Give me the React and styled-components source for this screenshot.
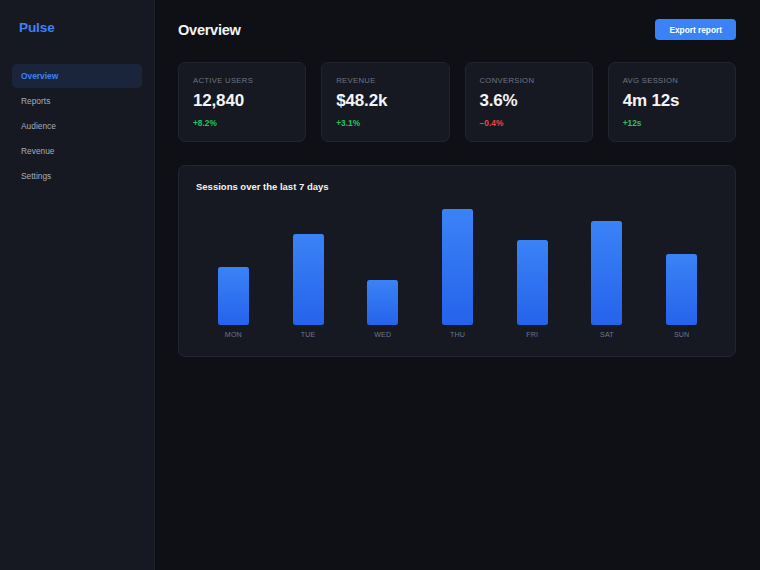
import React from 'react';
import styled, { createGlobalStyle } from 'styled-components';

const GlobalStyle = createGlobalStyle`
  * { box-sizing: border-box; }
  html, body {
    margin: 0;
    padding: 0;
    background: #0f1015;
    font-family: "Liberation Sans", Arial, sans-serif;
  }
`;

const stats = [
  { label: 'Active users', value: '12,840', delta: '+8.2%', up: true },
  { label: 'Revenue', value: '$48.2k', delta: '+3.1%', up: true },
  { label: 'Conversion', value: '3.6%', delta: '\u22120.4%', up: false },
  { label: 'Avg session', value: '4m 12s', delta: '+12s', up: true },
];

// bar heights in px, THU is the peak
const sessions = [
  { day: 'MON', h: 58 },
  { day: 'TUE', h: 91 },
  { day: 'WED', h: 45 },
  { day: 'THU', h: 116 },
  { day: 'FRI', h: 85 },
  { day: 'SAT', h: 104 },
  { day: 'SUN', h: 71 },
];

const navItems = ['Overview', 'Reports', 'Audience', 'Revenue', 'Settings'];

export default function App() {
  return (
    <>
      <GlobalStyle />
      <Layout>
        <Sidebar>
          <Logo>Pulse</Logo>
          <Nav>
            {navItems.map((item, i) => (
              <NavItem key={item} $active={i === 0}>{item}</NavItem>
            ))}
          </Nav>
        </Sidebar>
        <Main>
          <Header>
            <Title>Overview</Title>
            <ExportBtn>Export report</ExportBtn>
          </Header>
          <StatGrid>
            {stats.map((s) => (
              <StatCard key={s.label}>
                <StatLabel>{s.label}</StatLabel>
                <StatValue>{s.value}</StatValue>
                <StatDelta $up={s.up}>{s.delta}</StatDelta>
              </StatCard>
            ))}
          </StatGrid>
          <ChartCard>
            <ChartTitle>Sessions over the last 7 days</ChartTitle>
            <Chart>
              {sessions.map((d) => (
                <Column key={d.day}>
                  <Bar style={{ height: d.h }} />
                  <DayLabel>{d.day}</DayLabel>
                </Column>
              ))}
            </Chart>
          </ChartCard>
        </Main>
      </Layout>
    </>
  );
}

const Layout = styled.div`
  display: flex;
  min-height: 100vh;
`;

const Sidebar = styled.aside`
  width: 155px;
  flex-shrink: 0;
  background: #161922;
  border-right: 1px solid #1e212b;
  padding: 20px 12px;
`;

const Logo = styled.div`
  color: #3b82f6;
  font-size: 13.6px;
  font-weight: 700;
  letter-spacing: -0.01em;
  padding-left: 7px;
  line-height: 16px;
`;

const Nav = styled.nav`
  margin-top: 28px;
  display: flex;
  flex-direction: column;
  gap: 1px;
`;

const NavItem = styled.div`
  height: 24px;
  display: flex;
  align-items: center;
  padding: 0 9px;
  border-radius: 5px;
  font-size: 8.4px;
  font-weight: ${(p) => (p.$active ? 600 : 400)};
  color: ${(p) => (p.$active ? '#3b82f6' : '#a6abb6')};
  background: ${(p) => (p.$active ? 'rgba(59, 130, 246, 0.12)' : 'transparent')};
`;

const Main = styled.main`
  flex: 1;
  padding: 19px 24px 24px 23px;
`;

const Header = styled.div`
  display: flex;
  justify-content: space-between;
  align-items: center;
  height: 21px;
`;

const Title = styled.h1`
  margin: 0;
  color: #f3f4f6;
  font-size: 14.6px;
  font-weight: 700;
  letter-spacing: -0.02em;
`;

const ExportBtn = styled.button`
  height: 21px;
  padding: 0 14px;
  border: none;
  border-radius: 4px;
  background: #3b82f6;
  color: #fff;
  font-family: inherit;
  font-size: 8.3px;
  font-weight: 700;
`;

const StatGrid = styled.div`
  margin-top: 22px;
  display: grid;
  grid-template-columns: repeat(4, 1fr);
  gap: 15px;
`;

const StatCard = styled.div`
  height: 80px;
  background: #161922;
  border: 1px solid #22252f;
  border-radius: 7px;
  padding: 13px 14px;
`;

const StatLabel = styled.div`
  color: #6f7581;
  font-size: 7.7px;
  line-height: 9px;
  letter-spacing: 0.04em;
  text-transform: uppercase;
`;

const StatValue = styled.div`
  margin-top: 6px;
  color: #f3f4f6;
  font-size: 17px;
  font-weight: 700;
  line-height: 20px;
  letter-spacing: -0.01em;
`;

const StatDelta = styled.div`
  margin-top: 7px;
  color: ${(p) => (p.$up ? '#22c55e' : '#ef4444')};
  font-size: 8.3px;
  font-weight: 600;
  line-height: 10px;
`;

const ChartCard = styled.section`
  margin-top: 23px;
  background: #161922;
  border: 1px solid #22252f;
  border-radius: 7px;
  padding: 15px 16px 16px 17px;
`;

const ChartTitle = styled.h2`
  margin: 0;
  color: #f3f4f6;
  font-size: 9.5px;
  font-weight: 700;
  line-height: 12px;
`;

const Chart = styled.div`
  margin-top: 16px;
  display: grid;
  grid-template-columns: repeat(7, 1fr);
  align-items: end;
  height: 131px;
`;

const Column = styled.div`
  display: flex;
  flex-direction: column;
  align-items: center;
  gap: 6px;
`;

const Bar = styled.div`
  width: 31px;
  border-radius: 2.5px;
  background: linear-gradient(180deg, #3b82f6 0%, #2563eb 100%);
`;

const DayLabel = styled.div`
  color: #70768a;
  font-size: 7.1px;
  line-height: 9px;
  letter-spacing: 0.02em;
`;
